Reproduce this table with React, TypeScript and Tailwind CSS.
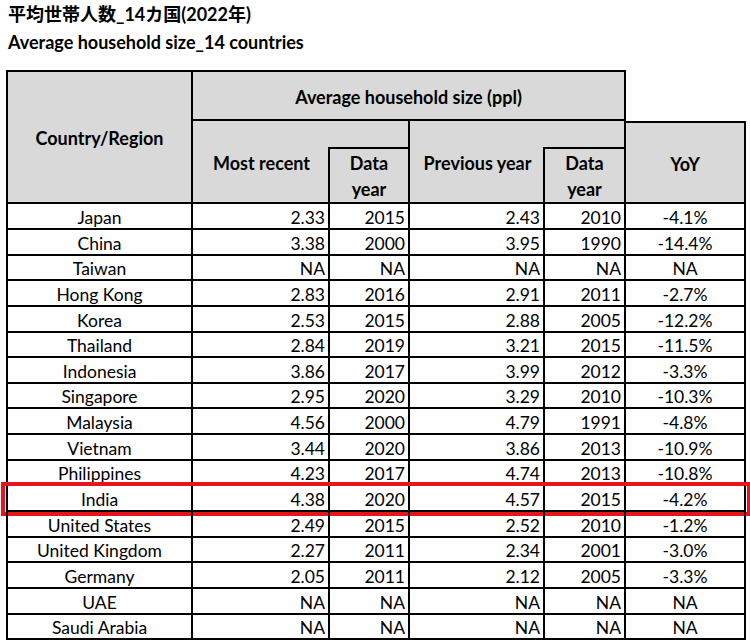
import React from "react";

const rows: [string, string, string, string, string, string][] = [
  ["Japan", "2.33", "2015", "2.43", "2010", "-4.1%"],
  ["China", "3.38", "2000", "3.95", "1990", "-14.4%"],
  ["Taiwan", "NA", "NA", "NA", "NA", "NA"],
  ["Hong Kong", "2.83", "2016", "2.91", "2011", "-2.7%"],
  ["Korea", "2.53", "2015", "2.88", "2005", "-12.2%"],
  ["Thailand", "2.84", "2019", "3.21", "2015", "-11.5%"],
  ["Indonesia", "3.86", "2017", "3.99", "2012", "-3.3%"],
  ["Singapore", "2.95", "2020", "3.29", "2010", "-10.3%"],
  ["Malaysia", "4.56", "2000", "4.79", "1991", "-4.8%"],
  ["Vietnam", "3.44", "2020", "3.86", "2013", "-10.9%"],
  ["Philippines", "4.23", "2017", "4.74", "2013", "-10.8%"],
  ["India", "4.38", "2020", "4.57", "2015", "-4.2%"],
  ["United States", "2.49", "2015", "2.52", "2010", "-1.2%"],
  ["United Kingdom", "2.27", "2011", "2.34", "2001", "-3.0%"],
  ["Germany", "2.05", "2011", "2.12", "2005", "-3.3%"],
  ["UAE", "NA", "NA", "NA", "NA", "NA"],
  ["Saudi Arabia", "NA", "NA", "NA", "NA", "NA"],
];

const cols = "grid-cols-[187px_137px_80px_135px_81px_120px]";

export default function App() {
  return (
    <div
      className="w-[750px] h-[644px] bg-white text-black overflow-hidden"
      style={{ fontFamily: 'Lato, "Noto Sans CJK JP", sans-serif' }}
    >
      <div className="pl-[8px] pt-[2px] h-[28px] text-[18px] font-bold leading-[24px]">
        平均世帯人数_14カ国(2022年)
      </div>
      <div className="pl-[8px] h-[42px] text-[18px] font-bold leading-[28px]">
        Average household size_14 countries
      </div>
      <div className="pl-[6px]">
        {/* header */}
        <div className={`grid ${cols} grid-rows-[51px_26px_57px] text-[18px] font-bold leading-[26px]`}>
          <div className="col-start-1 row-start-1 row-span-3 bg-[#d9d9d9] border-2 border-black flex items-center justify-center pt-[2px]">
            Country/Region
          </div>
          <div className="col-start-2 col-span-4 row-start-1 bg-[#d9d9d9] border-t-2 border-r-2 border-b-2 border-black flex items-center justify-center pt-[2px]">
            Average household size (ppl)
          </div>
          <div className="col-start-6 row-start-1" />
          <div className="col-start-2 row-start-2 row-span-2 bg-[#d9d9d9] border-b-2 border-black flex items-center justify-center pt-[2px]">
            Most recent
          </div>
          <div className="col-start-3 row-start-2 bg-[#d9d9d9] border-r-2 border-black" />
          <div className="col-start-3 row-start-3 bg-[#d9d9d9] border-2 border-black -ml-[2px] flex flex-col items-center justify-center pt-[1px]">
            <span>Data</span>
            <span>year</span>
          </div>
          <div className="col-start-4 row-start-2 row-span-2 bg-[#d9d9d9] border-b-2 border-black flex items-center justify-center pt-[2px]">
            Previous year
          </div>
          <div className="col-start-5 row-start-2 bg-[#d9d9d9] border-r-2 border-black" />
          <div className="col-start-5 row-start-3 bg-[#d9d9d9] border-2 border-black -ml-[2px] flex flex-col items-center justify-center pt-[1px]">
            <span>Data</span>
            <span>year</span>
          </div>
          <div className="col-start-6 row-start-2 row-span-2 bg-[#d9d9d9] border-t-2 border-r-2 border-b-2 border-black flex items-center justify-center pt-[2px]">
            YoY
          </div>
        </div>
        {/* body */}
        <div className="text-[17.5px] leading-[20px]">
          {rows.map((r) => (
            <div key={r[0]} className={`relative grid ${cols} h-[25.65px]`}>
              <div className="border-l-2 border-r-2 border-b-2 border-black flex items-center justify-center pt-[4px]">
                {r[0]}
              </div>
              <div className="border-r-2 border-b-2 border-black flex items-center justify-end pr-[3px] pt-[4px]">
                {r[1]}
              </div>
              <div className="border-r-2 border-b-2 border-black flex items-center justify-end pr-[3px] pt-[4px]">
                {r[2]}
              </div>
              <div className="border-r-2 border-b-2 border-black flex items-center justify-end pr-[3px] pt-[4px]">
                {r[3]}
              </div>
              <div className="border-r-2 border-b-2 border-black flex items-center justify-end pr-[3px] pt-[4px]">
                {r[4]}
              </div>
              <div className="border-r-2 border-b-2 border-black flex items-center justify-center pt-[4px]">
                {r[5]}
              </div>
              {r[0] === "India" && (
                <div className="absolute left-[-5px] right-[-1px] top-[-4px] bottom-[-4px] border-[4px] border-[#e8141c] pointer-events-none" />
              )}
            </div>
          ))}
        </div>
      </div>
    </div>
  );
}
